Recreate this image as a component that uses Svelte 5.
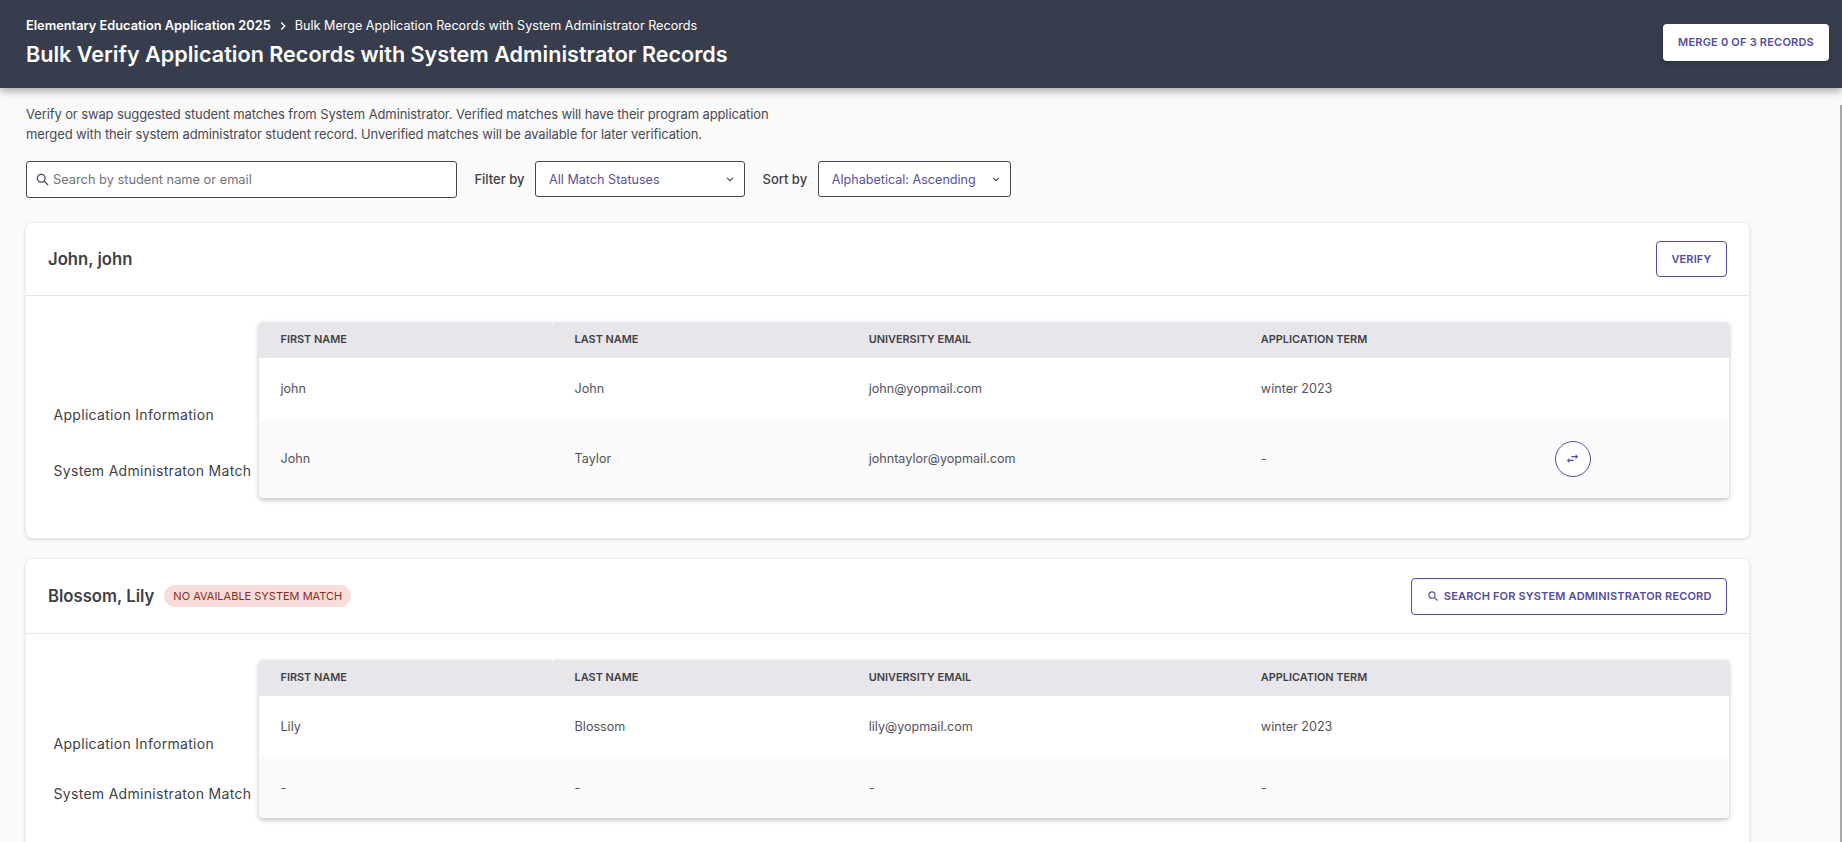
<script>
	// Students waiting on a system administrator match
	const columns = ['First Name', 'Last Name', 'University Email', 'Application Term'];

	const records = [
		{
			name: 'John, john',
			noMatch: false,
			application: ['john', 'John', 'john@yopmail.com', 'winter 2023'],
			match: ['John', 'Taylor', 'johntaylor@yopmail.com', '-']
		},
		{
			name: 'Blossom, Lily',
			noMatch: true,
			application: ['Lily', 'Blossom', 'lily@yopmail.com', 'winter 2023'],
			match: ['-', '-', '-', '-']
		}
	];
</script>

<div class="page">
	<header class="topbar">
		<div class="topbar-text">
			<nav class="crumbs">
				<span class="crumb-root">Elementary Education Application 2025</span>
				<svg class="crumb-sep" viewBox="0 0 24 24" width="14" height="14" fill="none" stroke="currentColor" stroke-width="2.4"><path d="M9 6l6 6-6 6" /></svg>
				<span>Bulk Merge Application Records with System Administrator Records</span>
			</nav>
			<h1>Bulk Verify Application Records with System Administrator Records</h1>
		</div>
		<button class="merge-btn">Merge 0 of 3 Records</button>
	</header>

	<main class="content">
		<p class="intro">
			Verify or swap suggested student matches from System Administrator. Verified matches will have their program application<br />
			merged with their system administrator student record. Unverified matches will be available for later verification.
		</p>

		<div class="filters">
			<label class="search">
				<svg viewBox="0 0 24 24" width="15" height="15" fill="none" stroke="#3f4350" stroke-width="2"><circle cx="10" cy="10" r="6.2" /><path d="M14.8 14.8L21 21" /></svg>
				<input type="text" placeholder="Search by student name or email" />
			</label>
			<span class="filter-label">Filter by</span>
			<div class="select status">
				<span>All Match Statuses</span>
				<svg viewBox="0 0 24 24" width="14" height="14" fill="none" stroke="#4a4a55" stroke-width="2"><path d="M7 10l5 5 5-5" /></svg>
			</div>
			<span class="filter-label">Sort by</span>
			<div class="select sort">
				<span>Alphabetical: Ascending</span>
				<svg viewBox="0 0 24 24" width="14" height="14" fill="none" stroke="#4a4a55" stroke-width="2"><path d="M7 10l5 5 5-5" /></svg>
			</div>
		</div>

		{#each records as record}
			<section class="card">
				<div class="card-head" class:tall={record.noMatch}>
					<div class="who">
						<h2>{record.name}</h2>
						{#if record.noMatch}
							<span class="badge">No Available System Match</span>
						{/if}
					</div>
					{#if record.noMatch}
						<button class="outline-btn search-btn">
							<svg viewBox="0 0 24 24" width="12" height="12" fill="none" stroke="currentColor" stroke-width="2.2"><circle cx="10" cy="10" r="6.2" /><path d="M14.8 14.8L21 21" /></svg>
							Search for System Administrator Record
						</button>
					{:else}
						<button class="outline-btn">Verify</button>
					{/if}
				</div>

				<div class="card-body">
					<div class="row-labels">
						<span>Application Information</span>
						<span>System Administraton Match</span>
					</div>
					<div class="table-wrap">
						<table>
							<colgroup>
								<col class="wide" /><col class="wide" /><col class="widest" /><col class="wide" /><col class="narrow" />
							</colgroup>
							<thead>
								<tr>
									{#each columns as col}
										<th>{col}</th>
									{/each}
									<th></th>
								</tr>
							</thead>
							<tbody>
								<tr>
									{#each record.application as value}
										<td>{value}</td>
									{/each}
									<td></td>
								</tr>
								<tr class="alt">
									{#each record.match as value}
										<td>{value}</td>
									{/each}
									<td>
										{#if !record.noMatch}
											<button class="swap-btn" aria-label="Swap match">
												<svg viewBox="0 0 24 24" width="15" height="15" fill="currentColor">
													<path d="M6.99 11L3 15l3.99 4v-3H14v-2H6.99v-3zM21 9l-4-4v3H10v2h7v3l4-4z" />
												</svg>
											</button>
										{/if}
									</td>
								</tr>
							</tbody>
						</table>
					</div>
				</div>
			</section>
		{/each}
	</main>
	<div class="scroll-thumb"></div>
</div>

<style>
	:global(body) {
		margin: 0;
		background: #fafafa;
		font-family: Inter, "Liberation Sans", sans-serif;
		color: #3f3f46;
	}

	.page {
		position: relative;
		height: 842px;
		overflow: hidden;
		background: #fafafa;
	}

	.topbar {
		position: relative;
		height: 88px;
		box-sizing: border-box;
		padding: 0 13px 4px 26px;
		display: flex;
		align-items: center;
		justify-content: space-between;
		background: #373d4c;
		color: #fff;
		box-shadow: 0 3px 8px rgba(0, 0, 0, 0.35);
	}

	.crumbs {
		display: flex;
		align-items: center;
		font-size: 12.6px;
		line-height: 20px;
		margin-bottom: 4px;
	}

	.crumb-root {
		font-size: 12.8px;
		font-weight: 600;
	}

	.crumb-sep {
		margin: 0 5px;
	}

	h1 {
		margin: 0;
		font-size: 21.6px;
		line-height: 28px;
		font-weight: 600;
	}

	.merge-btn {
		width: 166px;
		height: 37px;
		margin-top: 1px;
		padding: 0 0 2px;
		border: none;
		border-radius: 4px;
		background: #fff;
		color: #544c9a;
		font: 600 11px Inter, sans-serif;
		text-transform: uppercase;
		letter-spacing: 0.2px;
		box-shadow: 0 2px 4px rgba(0, 0, 0, 0.25);
	}

	.content {
		padding: 16px 0 0 26px;
		width: 1723px;
	}

	.intro {
		margin: 0;
		font-size: 13px;
		line-height: 20px;
		letter-spacing: -0.11px;
		color: #4a4a52;
	}

	.filters {
		display: flex;
		align-items: center;
		height: 38px;
		margin-top: 16px;
		margin-bottom: 25px;
	}

	.search {
		width: 431px;
		height: 37px;
		box-sizing: border-box;
		display: flex;
		align-items: center;
		gap: 3px;
		padding-left: 8px;
		border: 1px solid #45454d;
		border-radius: 3px;
		background: #fff;
	}

	.search input {
		flex: 1;
		border: none;
		outline: none;
		background: transparent;
		font: 12.8px Inter, sans-serif;
		padding: 0;
	}

	.search input::placeholder {
		color: #71717a;
		opacity: 1;
	}

	.filter-label {
		margin: 0 10.6px 0 17.4px;
		font-size: 13px;
		font-weight: 500;
		color: #3f3f46;
	}

	.select {
		height: 36px;
		box-sizing: border-box;
		display: flex;
		align-items: center;
		justify-content: space-between;
		padding: 0 7px 0 13px;
		border: 1px solid #45454d;
		border-radius: 3px;
		background: #fff;
		color: #5a5296;
		font-size: 12.6px;
	}

	.status {
		width: 210px;
	}

	.sort {
		width: 193px;
	}

	.card {
		margin-bottom: 21px;
		border-radius: 6px;
		background: #fff;
		box-shadow: 0 1px 4px rgba(0, 0, 0, 0.16);
	}

	.card-head {
		height: 73px;
		box-sizing: border-box;
		display: flex;
		align-items: center;
		justify-content: space-between;
		padding: 0 22.5px 0 22px;
		border-bottom: 1px solid #e6e6e8;
	}

	.card-head.tall {
		height: 75px;
	}

	.who {
		display: flex;
		align-items: center;
		gap: 10px;
	}

	h2 {
		margin: 0;
		font-size: 16.7px;
		line-height: 22px;
		font-weight: 600;
		color: #3f3f46;
	}

	.badge {
		height: 22px;
		padding: 0 9px;
		display: flex;
		align-items: center;
		border-radius: 11px;
		background: #f8dedb;
		color: #8c2a22;
		font-size: 11px;
		text-transform: uppercase;
	}

	.outline-btn {
		height: 36px;
		padding: 0 14px;
		display: flex;
		align-items: center;
		gap: 5px;
		border: 1px solid #544c9a;
		border-radius: 4px;
		background: #fff;
		color: #544c9a;
		font: 600 11px Inter, sans-serif;
		text-transform: uppercase;
		letter-spacing: 0.15px;
	}

	.search-btn {
		height: 37px;
		padding: 0 14px 0 15px;
	}

	.card-body {
		display: flex;
		padding: 26px 20px 40px 27.5px;
	}

	.row-labels {
		width: 205px;
		flex-shrink: 0;
		display: grid;
		grid-template-rows: 37fr 31.5fr 31.5fr;
		font-size: 14px;
		color: #3f3f46;
		letter-spacing: 0.3px;
	}

	.row-labels span {
		align-self: center;
		white-space: nowrap;
	}

	.row-labels span:first-child {
		grid-row: 2;
	}

	.row-labels span:last-child {
		grid-row: 3;
	}

	.table-wrap {
		flex: 1;
		border-radius: 4px;
		overflow: hidden;
		box-shadow: 0 2px 5px rgba(0, 0, 0, 0.25);
	}

	table {
		width: 100%;
		table-layout: fixed;
		border-collapse: collapse;
	}

	col.wide {
		width: 20%;
	}

	col.widest {
		width: 26.67%;
	}

	col.narrow {
		width: 13.33%;
	}

	th {
		height: 34px;
		padding: 0 22px 2px;
		background: #e8e6eb;
		color: #3f3f46;
		font-size: 10.9px;
		font-weight: 600;
		text-align: left;
		text-transform: uppercase;
	}

	/* tiny resize notch at the top of the first column */
	th:first-child {
		position: relative;
	}

	th:first-child::after {
		content: '';
		position: absolute;
		top: 0;
		right: 0;
		width: 1px;
		height: 2px;
		background: #fff;
	}

	td {
		padding: 21.5px 22px;
		font-size: 12.6px;
		line-height: 18px;
		color: #52525b;
	}

	tr.alt td {
		background: #fafafa;
	}

	.swap-btn {
		width: 36px;
		height: 36px;
		padding: 0;
		display: flex;
		align-items: center;
		justify-content: center;
		border: 1px solid #544c9a;
		border-radius: 50%;
		background: #fff;
		color: #544c9a;
	}

	.scroll-thumb {
		position: absolute;
		top: 105px;
		right: 0;
		bottom: 0;
		width: 2px;
		background: #a8a8a8;
	}
</style>
